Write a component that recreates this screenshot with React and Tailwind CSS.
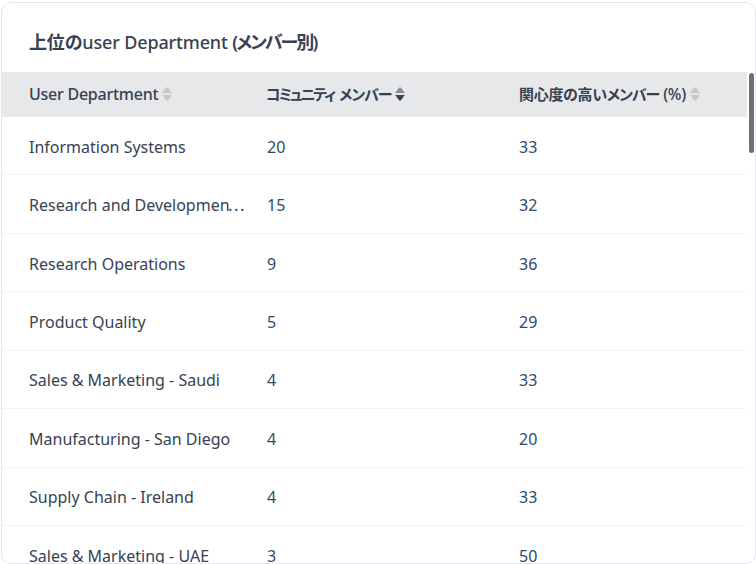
import React from 'react';

const ROWS = [
  { name: 'Information Systems', members: 20, pct: 33 },
  { name: 'Research and Developmen', cut: true, members: 15, pct: 32 },
  { name: 'Research Operations', members: 9, pct: 36 },
  { name: 'Product Quality', members: 5, pct: 29 },
  { name: 'Sales & Marketing - Saudi', members: 4, pct: 33 },
  { name: 'Manufacturing - San Diego', members: 4, pct: 20 },
  { name: 'Supply Chain - Ireland', members: 4, pct: 33 },
  { name: 'Sales & Marketing - UAE', members: 3, pct: 50 },
  { name: 'Quality Assurance', members: 3, pct: 33 },
];

const SortIcon = ({ active }) => (
  <svg width="10" height="14" viewBox="0 0 10 14" className="ml-[4px] shrink-0">
    <path d="M4.2 0.5 H5.8 L9.8 6 H0.2 Z" fill={active ? '#8b8f96' : '#c5c7cb'} />
    <path d="M4.2 13.5 H5.8 L9.8 8 H0.2 Z" fill={active ? '#374151' : '#c5c7cb'} />
  </svg>
);

const HeaderCell = ({ children, active, className }) => (
  <div className={`flex items-center pb-[2px] ${className}`}>
    <span className="text-[16px] font-medium tracking-[-0.25px] [font-feature-settings:'palt'] text-[#374151] whitespace-nowrap">{children}</span>
    <SortIcon active={active} />
  </div>
);

export default function App() {
  return (
    <div className="h-[564px] w-[756px] bg-white pt-[2px] pl-px font-['Noto_Sans','Noto_Sans_CJK_JP',sans-serif]">
      <div className="relative h-[562px] w-[755px] overflow-hidden rounded-[10px] border border-[#e5e7eb] bg-white">
        <h2 className="h-[69px] pl-[27px] pt-[25px] text-[18px] leading-[28px] font-medium tracking-[-0.15px] text-[#374151] whitespace-nowrap [font-feature-settings:'palt']">
          <span className="font-bold">上位の</span>user Department <span className="font-semibold tracking-[-1.9px]">(メンバー別)</span>
        </h2>

        {/* Table */}
        <div className="w-[745px]">
          <div className="flex h-[45px] bg-[#e7e8ea]">
            <HeaderCell className="w-[243px] pl-[27px]">User Department</HeaderCell>
            <HeaderCell active className="w-[253px] pl-[21px]">
              <span className="text-[15px] font-bold tracking-[-2.1px]">コミュニティ</span>
              <span className="ml-[5px] text-[15px] font-bold tracking-[-1px]">メンバー</span>
            </HeaderCell>
            <HeaderCell className="flex-1 pl-[21px]">
              <span className="text-[15px] font-bold tracking-[-0.3px]">関心度の高い</span>
              <span className="text-[15px] font-bold tracking-[-1px]">メンバー</span> (%)
            </HeaderCell>
          </div>
          {ROWS.map((row) => (
            <div key={row.name} className="flex h-[58.45px] items-center border-b border-[#f3f4f6] pt-[2px] text-[16px] text-[#374151]">
              <div className="w-[243px] whitespace-nowrap pl-[27px]">
                {row.name}
                {row.cut && <span className="-ml-[2px] font-['Noto_Sans_CJK_JP',sans-serif] leading-[0]">⋯</span>}
              </div>
              <div className="w-[253px] pl-[22px] text-[#2f4a6b]">{row.members}</div>
              <div className="flex-1 pl-[21px] text-[#2f4a6b]">{row.pct}</div>
            </div>
          ))}
        </div>

        {/* Scrollbar thumb */}
        <div className="absolute top-[70px] right-[1px] h-[80px] w-[5px] rounded-full bg-[#6f7175]" />
      </div>
    </div>
  );
}
